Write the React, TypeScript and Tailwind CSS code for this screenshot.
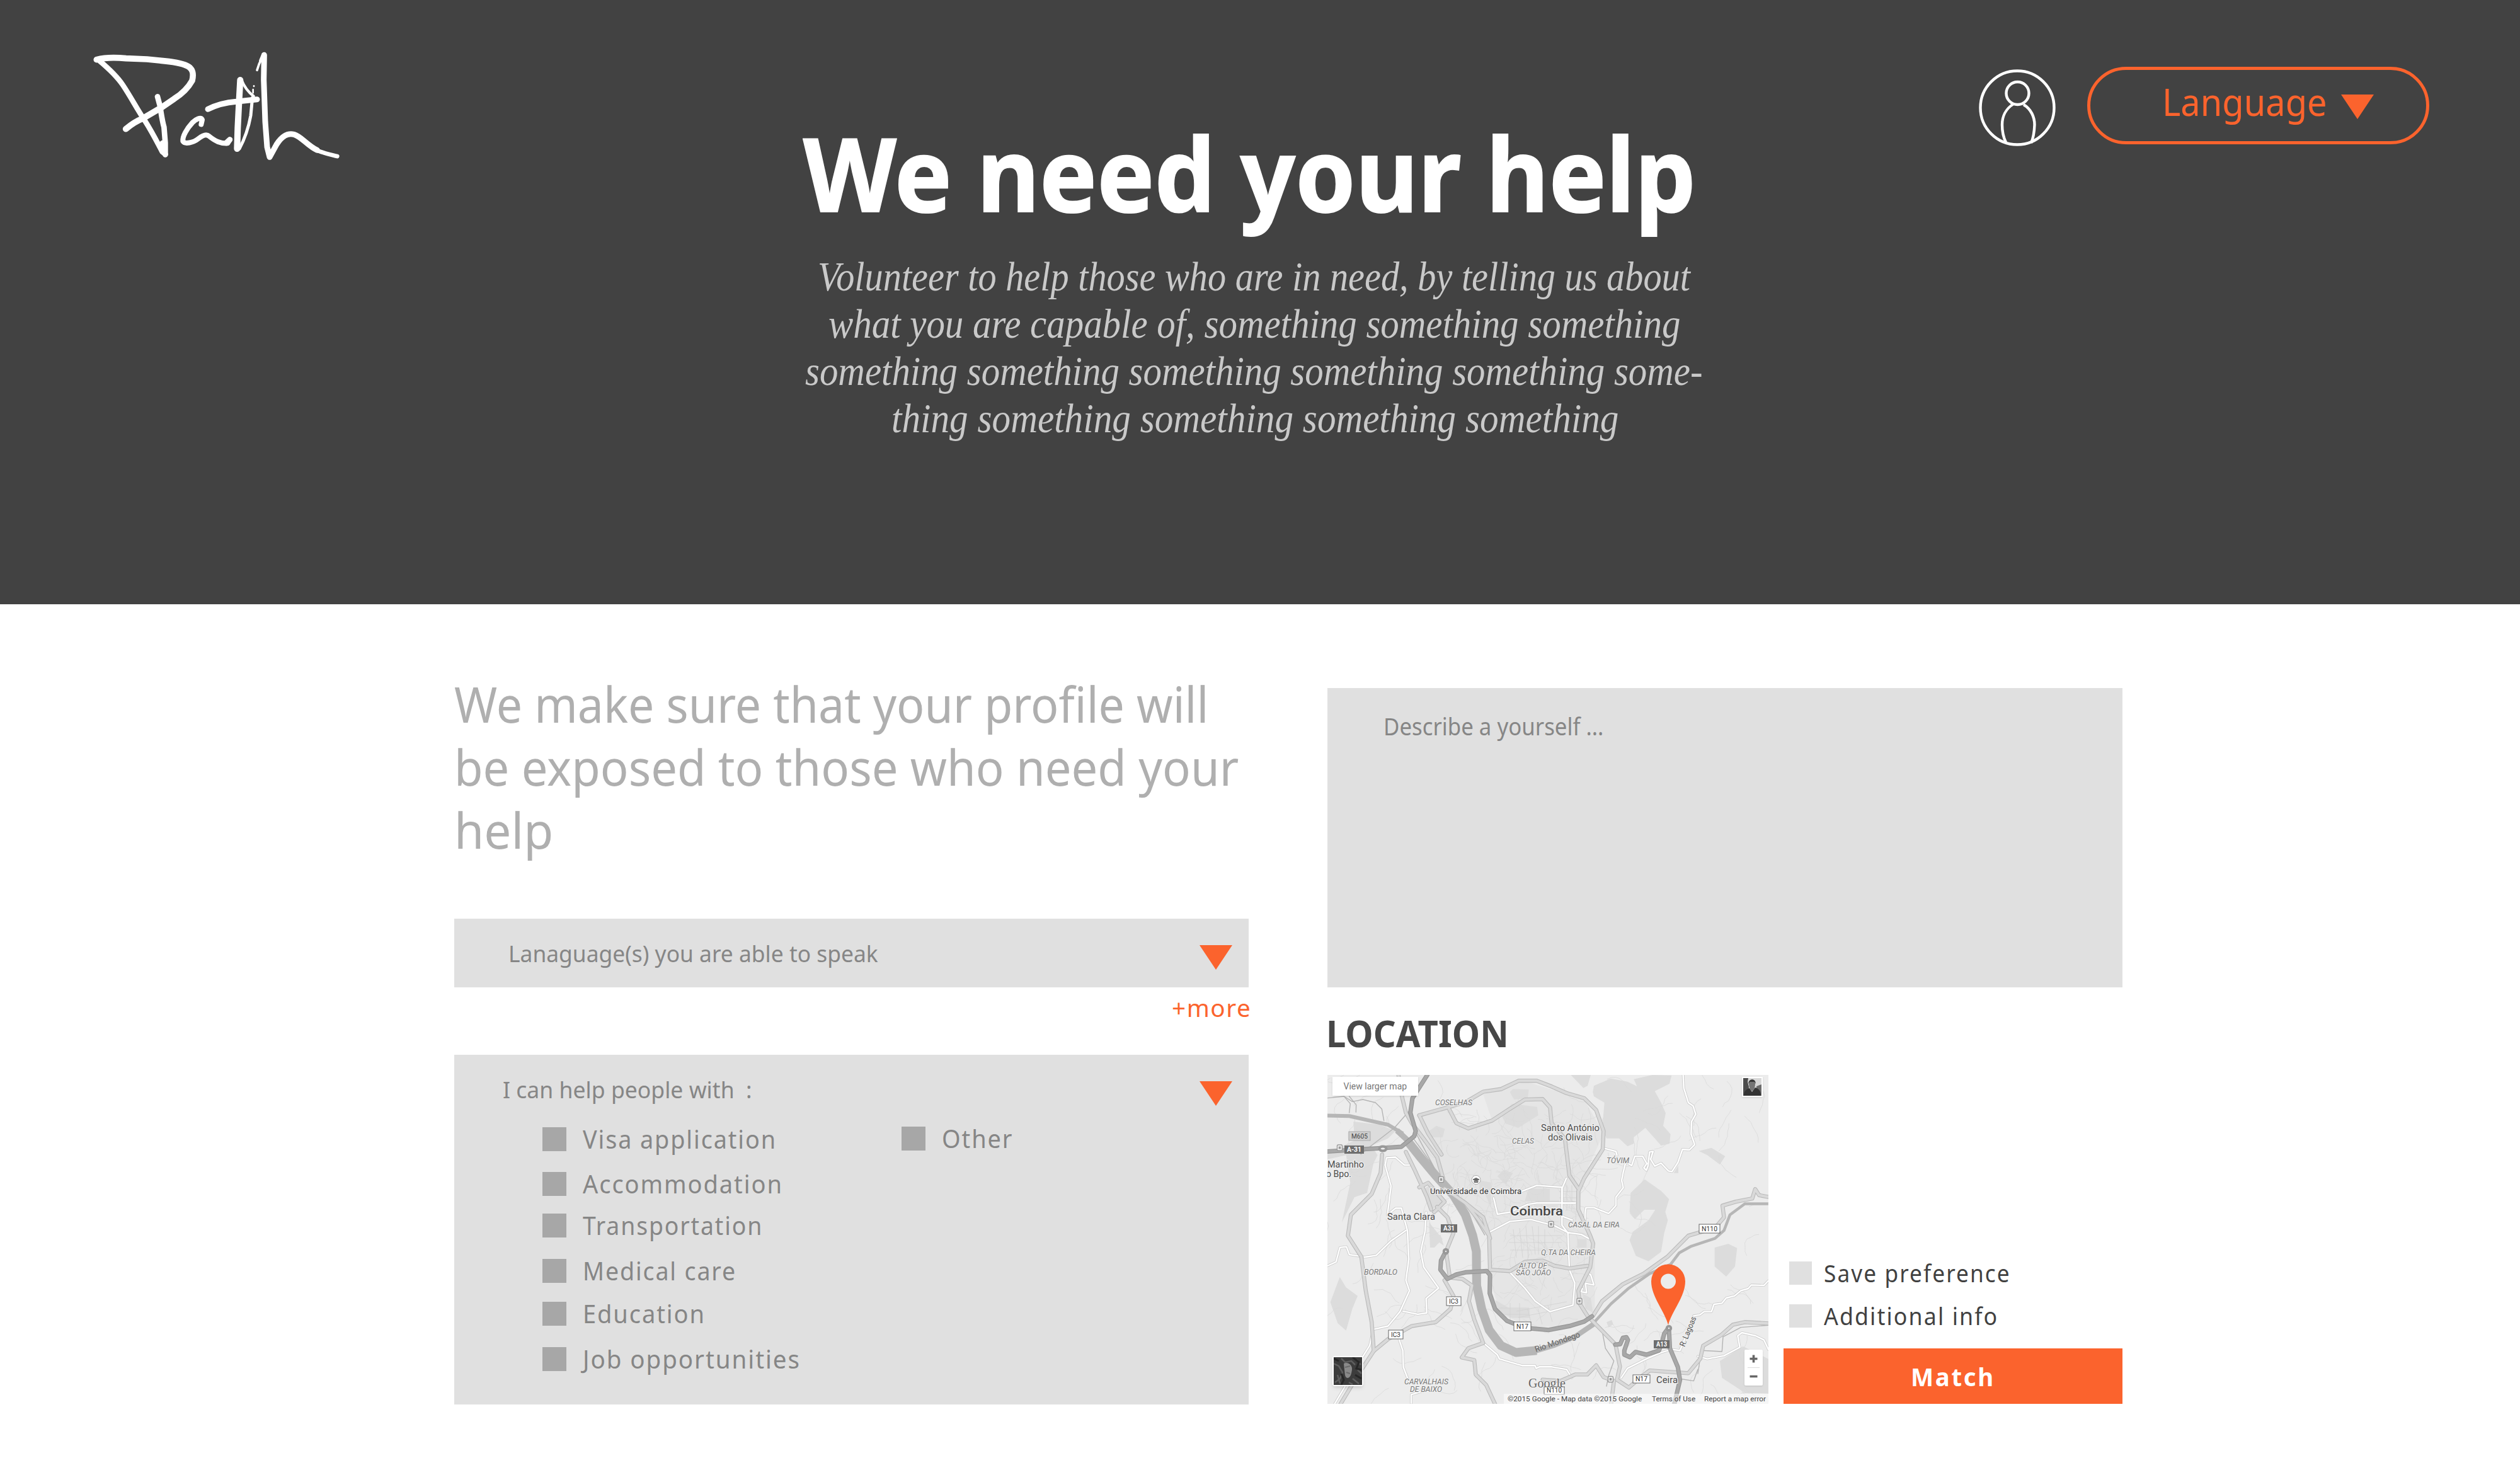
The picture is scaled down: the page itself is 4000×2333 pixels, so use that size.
import { useLayoutEffect, useRef, useState } from "react";
import type { ReactNode } from "react";

const SANS = "font-['Noto_Sans','Open_Sans',sans-serif]";

/** A single line of text condensed or widened to fill its box. */
function FitText({ className, children }: { className: string; children: ReactNode }) {
  const outer = useRef<HTMLSpanElement>(null);
  const inner = useRef<HTMLSpanElement>(null);
  const [scale, setScale] = useState(1);
  useLayoutEffect(() => {
    if (outer.current && inner.current) {
      setScale(outer.current.clientWidth / inner.current.offsetWidth);
    }
  }, []);
  return (
    <span ref={outer} className={`block shrink-0 whitespace-pre ${className}`}>
      <span ref={inner} className="inline-block origin-left" style={{ transform: `scaleX(${scale})` }}>
        {children}
      </span>
    </span>
  );
}

function Triangle({ className }: { className: string }) {
  return (
    <svg viewBox="0 0 52 39" className={`h-[39px] w-[52px] shrink-0 fill-[#fb632d] ${className}`}>
      <path d="M0 0H52L26 39Z" />
    </svg>
  );
}

function Logo() {
  return (
    <svg
      viewBox="0 0 1320 660"
      className="mt-[60px] ml-[120px] h-[220px] w-[440px] shrink-0"
      fill="none"
      stroke="#fff"
      strokeLinecap="round"
      strokeLinejoin="round"
    >
      <path strokeWidth="29" d="M100 104C130 96 180 92 240 98L340 102L400 108C450 112 500 118 530 133C562 148 562 175 555 204C535 240 505 268 470 290L412 330L320 384C290 396 262 415 239 434" />
      <path strokeWidth="25" d="M112 108C150 140 195 180 225 225C265 285 290 335 330 395C365 450 385 490 412 542L428 555" />
      <path strokeWidth="26" d="M390 280L402 325C408 360 412 395 421 425L427 500L427 556" />
      <path strokeWidth="24" d="M414 500L424 550L404 512" />
      <path strokeWidth="24" d="M598 412L603 390C596 376 572 388 556 404C530 432 508 470 511 492C520 508 560 500 585 480C605 464 622 456 635 468C665 492 690 504 724 502L735 484" />
      <path strokeWidth="27" d="M718 500L734 485" />
      <path strokeWidth="27" d="M630 340C670 320 715 308 765 304L864 293" />
      <path strokeWidth="30" d="M784 201L778 310L772 430L769 528" />
      <path strokeWidth="13" d="M790 200C800 226 822 258 848 278" />
      <path strokeWidth="8" d="M845 262V246M849 231V229" />
      <path strokeWidth="15" d="M842 285L834 370C824 425 806 480 780 528" />
      <path strokeWidth="27" d="M898 82L896 200L903 400L912 520L924 568L958 506C985 465 1010 453 1040 460C1075 470 1100 510 1150 535" />
      <path strokeWidth="20" d="M1130 527C1170 548 1210 555 1246 564" />
      <path strokeWidth="11" d="M864 154L874 124L890 92" />
      <path strokeWidth="17" d="M882 108L894 80" />
    </svg>
  );
}

function UserIcon() {
  return (
    <svg
      viewBox="0 0 122 122"
      className="mt-[110px] h-[122px] w-[122px] shrink-0"
      fill="none"
      stroke="#fff"
      strokeWidth="4.400"
    >
      <circle cx="61" cy="61" r="58.5" />
      <circle cx="61.500" cy="38" r="18" />
      <path d="M55 55C42 63 37 76 37 88C37 99 40 110 43 116M71 56C83 63 88.500 76 88.500 88C88 101 86 110 83 117" />
    </svg>
  );
}

/* ---------- Map ---------- */

const FRAMES = {
  all: "matrix(0.4719 0 0 0.4155 -17 -106.300)",
  tl: "matrix(0.3333 0 0 0.3333 -17 -16)",
  tr: "matrix(0.3333 0 0 0.3333 343 -16)",
  bl: "matrix(0.3333 0 0 0.3333 -17 254)",
  br: "matrix(0.3333 0 0 0.3333 343 254)",
};
type Shape = [keyof typeof FRAMES, string];

const URBAN: Shape[] = [
  ["all", "M350 400L440 380L480 440L520 460L590 430L560 330L700 280L900 350L965 480L900 640L880 760L935 900L935 1180L860 1215L720 1220L620 1170L585 1050L585 880L430 690L340 520Z"],
];

const PARKS: Shape[] = [
  ["tr", "M235 130L240 100L320 65L400 80L445 102L430 68L520 48L610 50L600 90L530 125L560 180L582 230L570 290L605 330L600 375L560 385L530 350L485 300L430 345L430 375L400 388L360 350L300 350L280 300L290 180L240 150Z"],
  ["tr", "M482 545L560 600L598 640L580 700L592 740L575 800L560 890L500 935L440 910L410 835L425 795L500 740L532 690L480 690L435 735L410 700L415 610Z"],
  ["br", "M815 60L880 42L922 62L912 150L870 198L815 150Z"],
  ["br", "M840 600L950 530L1071 590V755L960 752L850 680Z"],
  ["bl", "M65 320L110 200L140 250L195 290L170 350L140 455L100 420Z"],
  ["tl", "M175 270L300 285L375 315L340 350L260 385L290 430L270 470L240 610L180 630L120 750L160 560L140 430L50 450L50 420L180 360Z"],
  ["tr", "M740 410L800 395L865 435L840 475L780 430Z"],
  ["tr", "M130 48H225L210 100L190 110Z"],
  ["tr", "M620 515L642 480V515Z"],
  ["tl", "M535 315L570 290L610 305L600 345H550Z"],
  ["tl", "M920 130L935 115L1010 118L1005 160L940 165Z"],
  ["tl", "M880 240L930 185L1050 200L1055 240L960 300L900 280Z"],
  ["tl", "M775 550L830 560L830 680L800 610L775 600Z"],
  ["tl", "M860 530L890 500L935 515L900 570Z"],
  ["tl", "M500 600L540 570L600 650L550 690Z"],
  ["tl", "M535 750L600 830L560 870H540Z"],
  ["tl", "M1010 590H1110V650H990Z"],
  ["bl", "M535 0H590L605 50L560 20Z"],
  ["bl", "M850 310L920 350H1015V395H930L860 360Z"],
  ["br", "M185 280L225 300L235 370L200 350Z"],
  ["br", "M300 415L325 405L332 425L310 440Z"],
  ["br", "M160 20H205V60H160Z"],
];

const RIVER: [number, string][] = [
  [6, "M36 411L110 413L240 446L290 480"],
  [9, "M270 468L310 510L345 565"],
  [14, "M310 515L345 565L400 640L460 715L500 790L525 870L537 930L538 1060L555 1150L580 1230L620 1290L670 1316L740 1308"],
  [8, "M730 1312L800 1288L870 1255L935 1205"],
  [4.5, "M930 1205L990 1130L1050 1070L1120 1015L1190 980L1220 935L1260 910L1340 880L1370 850L1390 790L1440 748L1519 748"],
];

const ROADS: Shape[] = [
  ["all", "M275 256L285 330L300 400L320 440L360 500L405 570L425 650"],
  ["all", "M300 550L330 620L370 720L385 770M345 685L375 668L430 740L395 780"],
  ["all", "M345 410L440 380L500 360L560 320L620 310L680 278L740 278L790 300L840 325L900 345L940 390L965 470L962 540L900 650L880 700L880 770L920 870L930 900L920 990L880 1080L885 1130L910 1175L1005 1285L1020 1370L1010 1420L1050 1450L1090 1410L1120 1385L1250 1395L1290 1340L1300 1290L1360 1250L1400 1210L1440 1200L1519 1205"],
  ["all", "M445 385L470 440L510 460L590 430L650 385L700 350L760 348L785 380L790 440L835 500L850 640L880 690"],
  ["all", "M220 560L215 630L185 710L115 790L105 870L150 950L165 1080L185 1200L192 1310L140 1400L80 1513"],
  ["all", "M405 760L440 800L460 860L435 930L448 1030L490 1035L522 1060L512 1120L530 1190L560 1280L510 1300L488 1335L530 1345L535 1400L570 1440L600 1513"],
  ["all", "M192 1310L240 1265L320 1215L400 1200L450 1150L460 1100L430 1040"],
  ["all", "M430 690L500 745L545 810L580 870L583 1000L650 1005L700 970L760 965L800 985L850 995L910 985M500 745L560 800L583 880"],
  ["all", "M930 1175L960 1120L1030 1055L1100 1015L1180 950L1250 870L1340 840L1370 800L1365 755L1410 740L1465 728L1475 692L1488 715L1519 722"],
  ["all", "M760 1420L820 1425L870 1400L910 1400L940 1365L965 1410L1000 1425L990 1513M345 410L375 480L420 560"],
];

const STREETS: Shape[] = [
  ["all", "M690 700L740 678L825 685V745H870"],
  ["all", "M595 725L608 788L650 780L710 750L740 745H870"],
  ["all", "M580 857L650 815L720 808L800 832L845 858L890 865L922 885M825 795L860 810"],
  ["all", "M840 650L825 690V830L845 860L850 1000L868 1050L862 1135L785 1160L735 1120L700 1070L650 1010"],
  ["all", "M312 600H295L265 570L235 572L230 600L250 680L238 790L265 765L285 765L305 850L310 960L300 1040L312 1080L280 1160L240 1215L190 1228L178 1290L145 1350L60 1513"],
  ["all", "M368 780L365 850L350 930L360 990L410 1070L368 1110L370 1165L340 1170L290 1158"],
  ["all", "M160 952L200 945L250 890L300 850M36 985L65 970L78 915L100 912L110 942L155 950"],
  ["tr", "M665 48L668 110L690 180L712 195L725 235L705 270L703 330L720 380L695 405L662 402L640 465L612 508L595 505L560 468L530 482L510 450L522 412L505 415L498 480L490 502L478 490L492 470L472 435L435 435L420 480L405 470"],
  ["tr", "M280 395L345 412L350 430M390 470L380 510L372 550L380 585L345 630V670L310 708L240 680L202 680L198 710V740"],
  ["br", "M1071 218L1050 240L990 238L975 255L940 265L910 290L870 300L850 325L812 330L800 365L765 365L745 380L715 385"],
  ["br", "M735 578L780 590L860 575L935 535L925 480L945 465L1010 480L1050 500L1071 545"],
  ["bl", "M795 515L860 570L870 590L920 605L980 622H1040L1045 635L1060 628H1120L1190 640L1215 680"],
  ["bl", "M390 490L410 550L413 630L440 700M500 745L450 760V800"],
  ["br", "M370 680L400 635L490 590L560 560L610 545L650 550L675 490"],
  ["br", "M185 255L180 270L205 275L200 230L240 238L225 190L210 180"],
];

const MOTORWAYS: Shape[] = [
  ["all", "M372 256L322 345L315 400L333 470L328 490L285 530L225 535L150 540L36 548"],
  ["all", "M434 930L418 965L416 1000L440 1035L470 1018L500 1010L572 1005L583 1020L582 1090L600 1150L640 1195L700 1222L780 1230L850 1215L900 1198L926 1178"],
  ["br", "M342 522L365 520L378 490L395 487L402 500L385 550L385 570L412 582L438 557L490 570L550 550L562 520L575 470L597 440L602 540L640 630L650 690L622 810"],
];

const LANES: Shape[] = [
  ["tl", "M50 158L130 150L170 175L220 165L280 180L310 210L320 265M130 150L160 185L155 228M155 150L188 190L187 225M210 425L260 385L370 300L440 220"],
  ["br", "M240 425L280 460L295 540L335 600L310 670L300 720M735 660L752 550L850 555L855 485L940 440L1071 430M650 685L715 695L735 640"],
  ["tl", "M750 700L810 800M730 690L800 810M470 320L560 490M460 350L540 460L560 500"],
];

/** Deterministic fine streets: dense inside the city, sparse around it. */
function minorStreets(): string {
  let seed = 11;
  const rnd = () => {
    seed = (seed * 16807) % 2147483647;
    return seed / 2147483647;
  };
  let d = "";
  const walk = (x: number, y: number, steps: number, len: number) => {
    let a = rnd() * 6.28;
    d += `M${x.toFixed(1)} ${y.toFixed(1)}`;
    for (let i = 0; i < steps; i++) {
      a += (rnd() - 0.5) * 1.3;
      x += Math.cos(a) * len;
      y += Math.sin(a) * len;
      d += `L${x.toFixed(1)} ${y.toFixed(1)}`;
    }
  };
  for (let i = 0; i < 150; i++) walk(rnd() * 700, rnd() * 522, 7, 7);
  for (let i = 0; i < 130; i++) walk(190 + rnd() * 220, 60 + rnd() * 160, 6, 6);
  for (let i = 0; i < 60; i++) walk(275 + rnd() * 130, 210 + rnd() * 150, 5, 6);
  return d;
}

const GRID =
  "M330 200H368M328 208H366M326 216H366M372 175V215M380 175V215M388 175V215M368 185H395M368 195H395M295 245L300 290M305 243L310 290M315 240L319 290M325 240L330 285M335 240V285M345 245V290M290 255H372M288 266H372M290 278H375M300 375L380 360M303 385L378 370M318 372L325 400M334 370L341 396M350 366L357 392M272 370H320M272 380H320M290 362V392M305 362V392";

function Lines({ shapes, width, className }: { shapes: Shape[]; width: number; className: string }) {
  return (
    <g fill="none" strokeLinecap="round" strokeLinejoin="round" strokeWidth={width} className={className}>
      {shapes.map(([frame, d]) => (
        <path key={d} d={d} transform={FRAMES[frame]} vectorEffect="non-scaling-stroke" />
      ))}
    </g>
  );
}

type Label = { t: string; x: number; y: number; w: number; k: "area" | "town" | "city" | "poi" };
const LABELS: Label[] = [
  { t: "COSELHAS", x: 171, y: 48, w: 59, k: "area" },
  { t: "CELAS", x: 293, y: 109, w: 35, k: "area" },
  { t: "TÓVIM", x: 443, y: 140, w: 36, k: "area" },
  { t: "CASAL DA EIRA", x: 382, y: 242, w: 82, k: "area" },
  { t: "Q.TA DA CHEIRA", x: 339, y: 286, w: 87, k: "area" },
  { t: "ALTO DE", x: 304, y: 307, w: 45, k: "area" },
  { t: "SÃO JOÃO", x: 299, y: 318, w: 56, k: "area" },
  { t: "BORDALO", x: 58, y: 317, w: 53, k: "area" },
  { t: "CARVALHAIS", x: 122, y: 491, w: 70, k: "area" },
  { t: "DE BAIXO", x: 131, y: 503, w: 51, k: "area" },
  { t: "Santo António", x: 339, y: 89, w: 93, k: "town" },
  { t: "dos Olivais", x: 350, y: 104, w: 71, k: "town" },
  { t: "Santa Clara", x: 95, y: 230, w: 76, k: "town" },
  { t: "Martinho", x: 0, y: 147, w: 58, k: "town" },
  { t: "o Bpo.", x: -2, y: 162, w: 40, k: "town" },
  { t: "Ceira", x: 522, y: 489, w: 34, k: "town" },
  { t: "Coimbra", x: 290, y: 223, w: 84, k: "city" },
  { t: "Universidade de Coimbra", x: 163, y: 189, w: 145, k: "poi" },
];

const LABEL_STYLE = {
  area: "fill-[#787878] text-[12.5px] italic",
  town: "fill-[#4c4c4c] text-[14.5px]",
  city: "fill-[#454545] text-[20px] font-medium",
  poi: "fill-[#303030] text-[13px]",
};

type Shield = { t: string; x: number; y: number; w: number; h: number; k: "white" | "dark" | "grey" };
const SHIELDS: Shield[] = [
  { t: "M605", x: 34, y: 90, w: 34, h: 14, k: "grey" },
  { t: "A-31", x: 27, y: 112, w: 31, h: 13, k: "dark" },
  { t: "A31", x: 180, y: 237, w: 26, h: 13, k: "dark" },
  { t: "N110", x: 590, y: 237, w: 33, h: 14, k: "white" },
  { t: "IC3", x: 189, y: 352, w: 23, h: 14, k: "white" },
  { t: "IC3", x: 97, y: 405, w: 23, h: 14, k: "white" },
  { t: "N17", x: 296, y: 392, w: 27, h: 14, k: "white" },
  { t: "A13", x: 518, y: 421, w: 25, h: 13, k: "dark" },
  { t: "N17", x: 485, y: 476, w: 27, h: 13, k: "white" },
  { t: "N110", x: 344, y: 495, w: 32, h: 12, k: "white" },
];
const SHIELD_BOX = {
  white: "fill-white stroke-[#666]",
  dark: "fill-[#6e6e6e] stroke-none",
  grey: "fill-[#cfcfcf] stroke-[#aaa]",
};
const SHIELD_TEXT = {
  white: "fill-[#333]",
  dark: "fill-white font-bold",
  grey: "fill-[#444]",
};

const STATIONS: [number, number][] = [
  [19.5, 115.5],
  [180.500, 166],
  [355, 237],
  [400, 359],
  [449.5, 483],
];

function MapDrawing() {
  return (
    <svg viewBox="0 0 700 522" className="h-[522px] w-[700px] font-['Roboto',sans-serif]">
      <rect width="700" height="522" fill="#ececec" />
      <g fill="#e5e5e5">
        {URBAN.map(([f, d]) => (
          <path key={d} d={d} transform={FRAMES[f]} />
        ))}
      </g>
      <g fill="#dcdcdc">
        {PARKS.map(([f, d]) => (
          <path key={d} d={d} transform={FRAMES[f]} />
        ))}
      </g>
      <path d={minorStreets()} fill="none" stroke="#d9d9d9" strokeWidth="0.8" />
      <path d={GRID} fill="none" stroke="#d2d2d2" strokeWidth="0.8" />
      <g fill="none" stroke="#b6b6b6" strokeLinejoin="round">
        {RIVER.map(([w, d]) => (
          <path key={d} d={d} strokeWidth={w} transform={FRAMES.all} vectorEffect="non-scaling-stroke" />
        ))}
      </g>
      <Lines shapes={LANES} width={1.4} className="stroke-[#b4b4b4]" />
      <Lines shapes={STREETS} width={4} className="stroke-[#c9c9c9]" />
      <Lines shapes={STREETS} width={2.4} className="stroke-white" />
      <Lines shapes={ROADS} width={6.4} className="stroke-[#bababa]" />
      <Lines shapes={ROADS} width={4.2} className="stroke-[#d9d9d9]" />
      <Lines shapes={MOTORWAYS} width={7} className="stroke-[#969696]" />
      <Lines shapes={MOTORWAYS} width={4.600} className="stroke-[#a8a8a8]" />
      <g fill="#ececec" stroke="#989898" strokeWidth="4">
        <circle cx="188" cy="280" r="3.200" />
        <circle cx="542" cy="402" r="3.200" />
        <ellipse cx="88" cy="117" rx="5.500" ry="3.500" />
      </g>
      {STATIONS.map(([x, y]) => (
        <g key={x}>
          <rect x={x - 4} y={y - 4.5} width="8" height="9" rx="1.5" fill="#f4f4f4" stroke="#999" strokeWidth="1.4" />
          <rect x={x - 1.8} y={y - 2} width="3.600" height="4" fill="#999" />
        </g>
      ))}
      <circle cx="236" cy="166.500" r="7" fill="#fff" stroke="#aaa" />
      <path d="M231 166L236 163.500L241 166L236 168.500ZM233 168.500V170.500H239V168.500L236 170Z" fill="#666" stroke="#666" />
      {LABELS.map((l) => (
        <text
          key={l.t}
          x={l.x}
          y={l.y}
          textLength={l.w}
          lengthAdjust="spacingAndGlyphs"
          stroke="#f0f0f0"
          strokeWidth="2.500"
          paintOrder="stroke"
          strokeLinejoin="round"
          className={LABEL_STYLE[l.k]}
        >
          {l.t}
        </text>
      ))}
      <text transform="translate(331 440) rotate(-19)" textLength="75" lengthAdjust="spacingAndGlyphs" className="fill-[#666] text-[13px]">
        Rio Mondego
      </text>
      <text
        transform="translate(567 432) rotate(-68)"
        textLength="50"
        lengthAdjust="spacingAndGlyphs"
        stroke="#f0f0f0"
        strokeWidth="2.500"
        paintOrder="stroke"
        className="fill-[#555] text-[13px]"
      >
        R. Lagoas
      </text>
      <text x="319" y="496" textLength="59" lengthAdjust="spacingAndGlyphs" stroke="#f4f4f4" strokeWidth="1.500" paintOrder="stroke" className="fill-[#666] font-['Liberation_Serif',serif] text-[22px]">
        Google
      </text>
      {SHIELDS.map((s) => (
        <g key={`${s.t}-${s.x}`}>
          <rect x={s.x} y={s.y} width={s.w} height={s.h} className={SHIELD_BOX[s.k]} />
          <text
            x={s.x + 4}
            y={s.y + s.h - 2.6}
            textLength={s.w - 8}
            lengthAdjust="spacingAndGlyphs"
            className={`text-[11.5px] ${SHIELD_TEXT[s.k]}`}
          >
            {s.t}
          </text>
        </g>
      ))}
      <path
        d="M541 397C536 376 514 352 514 327.500A27 27 0 0 1 568 327.500C568 352 546 376 541 397ZM541 315.500A12 12 0 1 0 541 339.500A12 12 0 1 0 541 315.500Z"
        fill="#fb632d"
        fillRule="evenodd"
      />
    </svg>
  );
}

function SatelliteThumb() {
  return (
    <svg viewBox="0 0 45 44" className="h-full w-full">
      <rect width="45" height="44" fill="#3c3c3c" />
      <g fill="none" stroke="#5e5e5e" strokeWidth="2.500">
        <path d="M0 10L8 14L14 24L10 34L2 40M12 2L18 8L28 6L34 12M38 20L44 26M6 28L10 42M30 34L40 42M36 4L43 12M24 40L30 43" />
      </g>
      <path d="M12 44L16 36L12 26M30 0L40 8L36 18L44 20M34 28L44 34M0 2L8 6" fill="none" stroke="#262626" strokeWidth="3" />
      <path d="M16 10C22 7 30 12 29 20C28 26 27 32 22 33C17 32 18 26 17 20Z" fill="#8a8a8a" />
      <path d="M18 16L26 14M20 24L26 26" stroke="#6a6a6a" strokeWidth="2" />
    </svg>
  );
}

function Portrait() {
  return (
    <svg viewBox="0 0 29 28" className="h-full w-full">
      <rect width="29" height="28" fill="#d8d8d8" />
      <path d="M0 0H8L7 6L9 14L8 28H0Z" fill="#4c4c4c" />
      <path d="M21 13L29 10V28H21Z" fill="#6b6b6b" />
      <path d="M1 28C1 20 6 17 10 16L14 22L19 15C25 17 28 20 28 28Z" fill="#333" />
      <path d="M9 8C9 2 19 2 19 8C19 15 17 20 14 20.500C11 20 9 14 9 8Z" fill="#757575" />
      <path d="M8.500 9C7.500 0 21 0 19.500 9L18 6H10.500Z" fill="#383838" />
    </svg>
  );
}

function LocationMap() {
  return (
    <div className="relative h-[522px] w-[700px] shrink-0 overflow-hidden font-['Roboto',sans-serif]">
      <MapDrawing />
      <div className="absolute top-[3px] left-[8px] flex h-[30px] w-[136px] justify-center bg-white shadow-sm">
        <FitText className="w-[101px] text-[14px] leading-[30px] text-[#777]">View larger map</FitText>
      </div>
      <div className="absolute top-[3px] right-[9px] h-[32px] w-[33px] bg-white p-[2px] shadow">
        <Portrait />
      </div>
      <div className="absolute top-[446px] left-[8px] h-[48px] w-[49px] rounded-sm bg-white p-[2px] shadow-md">
        <SatelliteThumb />
      </div>
      <div className="absolute right-0 bottom-0 flex h-4 w-[420px] bg-white/50 pl-[6px] text-[11.5px] leading-4 text-[#444]">
        <FitText className="w-[213px]">©2015 Google - Map data ©2015 Google</FitText>
        <FitText className="ml-[16px] w-[69px]">Terms of Use</FitText>
        <FitText className="ml-[14px] w-[98px]">Report a map error</FitText>
      </div>
      <div className="absolute top-[436px] right-[9px] h-[57px] w-[29px] rounded-xs bg-white shadow">
        <svg viewBox="0 0 29 57" className="h-[57px] w-[29px]">
          <path d="M8.500 14.500H20.500M14.500 8.500V20.500M8.500 42.500H20.500" stroke="#666" strokeWidth="3.600" />
          <path d="M5 28.500H24" stroke="#ddd" />
        </svg>
      </div>
    </div>
  );
}

/* ---------- Form ---------- */

function HelpOption({ className, labelClass, children }: { className: string; labelClass: string; children: string }) {
  return (
    <label className={`flex h-[38px] items-start ${className}`}>
      <span className="h-[38px] w-[38px] shrink-0 bg-[#a7a7a7]" />
      <FitText className={`ml-[26px] text-[40px] leading-[38px] tracking-[0.05em] text-[#868686] ${labelClass}`}>
        {children}
      </FitText>
    </label>
  );
}

function Preference({ className, labelClass, children }: { className: string; labelClass: string; children: string }) {
  return (
    <label className={`flex h-[37px] items-start ${className}`}>
      <span className="h-[37px] w-[36px] shrink-0 bg-[#e0e0e0]" />
      <FitText className={`ml-[19px] text-[38px] leading-[37px] tracking-[0.06em] text-[#414141] ${labelClass}`}>
        {children}
      </FitText>
    </label>
  );
}

export default function App() {
  return (
    <div className={`min-h-[2333px] w-[4000px] bg-white ${SANS}`}>
      <header className="flex h-[959px] items-start bg-[#424242]">
        <Logo />
        <div className="ml-[712px] flex w-[1440px] shrink-0 flex-col pt-[173px]">
          <h1 className="font-bold text-white [-webkit-text-stroke:2px_white]">
            <FitText className="ml-[3px] w-[1417px] text-[162px] leading-[200px]">We need your help</FitText>
          </h1>
          <div className="mt-[29px] flex flex-col font-['Liberation_Serif',serif] text-[65px] leading-[75px] text-[#c9c9c9] italic">
            <FitText className="ml-[26px] w-[1385px]">Volunteer to help those who are in need, by telling us about</FitText>
            <FitText className="ml-[43px] w-[1352px]">what you are capable of, something something something</FitText>
            <FitText className="ml-[6px] w-[1425px]">something something something something something some-</FitText>
            <FitText className="ml-[143px] w-[1154px]">thing something something something something</FitText>
          </div>
        </div>
        <div className="ml-[429px] flex items-start">
          <UserIcon />
          <button className="mt-[106px] ml-[50px] flex h-[123px] w-[543px] items-start rounded-full border-[5px] border-[#fb632d] pl-[114px]">
            <FitText className="mt-[2px] w-[262px] text-left text-[60px] leading-[96px] text-[#fb632d]">Language</FitText>
            <Triangle className="mt-[39px] ml-[22px]" />
          </button>
        </div>
      </header>

      <main className="flex items-start pl-[721px]">
        <section className="w-[1261px] shrink-0 pt-[108px]">
          <h2 className="text-[78px] leading-[100px] text-[#afafaf]">
            <FitText className="w-[1197px]">We make sure that your profile will</FitText>
            <FitText className="w-[1245px]">be exposed to those who need your</FitText>
            <FitText className="w-[157px]">help</FitText>
          </h2>
          <div className="mt-[91px] flex h-[109px] items-start bg-[#e0e0e0] pl-[86px]">
            <FitText className="mt-[35px] w-[587px] text-[37px] leading-[40px] text-[#868686]">
              Lanaguage(s) you are able to speak
            </FitText>
            <Triangle className="mt-[42px] mr-[26px] ml-auto" />
          </div>
          <FitText className="mt-[12px] ml-[1139px] w-[126px] text-[38px] leading-[40px] tracking-[0.04em] text-[#fb632d]">
            +more
          </FitText>
          <div className="mt-[55px] h-[555px] bg-[#e0e0e0]">
            <div className="flex items-start pt-[35px]">
              <FitText className="ml-[77px] w-[396px] text-[37px] leading-[40px] text-[#868686]">
                {"I can help people with  :"}
              </FitText>
              <Triangle className="mt-[7px] mr-[26px] ml-auto" />
            </div>
            <div className="mt-[32px] flex pl-[140px]">
              <div className="w-[570px]">
                <HelpOption className="mt-[2px]" labelClass="w-[308px]">Visa application</HelpOption>
                <HelpOption className="mt-[33px]" labelClass="w-[318px]">Accommodation</HelpOption>
                <HelpOption className="mt-[28px]" labelClass="w-[286px]">Transportation</HelpOption>
                <HelpOption className="mt-[34px]" labelClass="w-[244px]">Medical care</HelpOption>
                <HelpOption className="mt-[30px]" labelClass="w-[195px]">Education</HelpOption>
                <HelpOption className="mt-[34px]" labelClass="w-[346px]">Job opportunities</HelpOption>
              </div>
              <HelpOption className="mt-[1px]" labelClass="w-[113px]">Other</HelpOption>
            </div>
          </div>
        </section>

        <section className="ml-[125px] w-[1262px] shrink-0 pt-[133px]">
          <div className="h-[475px] bg-[#e0e0e0] pt-[40px] pl-[89px]">
            <FitText className="w-[349px] text-[38px] leading-[40px] text-[#868686]">Describe a yourself ...</FitText>
          </div>
          <h3 className="mt-[42px] font-bold text-[#474747]">
            <FitText className="-ml-[2px] w-[290px] text-[60px] leading-[60px]">LOCATION</FitText>
          </h3>
          <div className="mt-[37px] flex h-[522px]">
            <LocationMap />
            <div className="ml-[24px] flex flex-1 flex-col justify-end">
              <Preference className="ml-[9px]" labelClass="w-[297px]">Save preference</Preference>
              <Preference className="mt-[31px] ml-[9px]" labelClass="w-[277px]">Additional info</Preference>
              <button className="mt-[33px] flex h-[88px] justify-center bg-[#fb632d] font-bold text-white">
                <FitText className="mt-[15px] w-[134px] text-left text-[40px] leading-[60px] tracking-[0.07em]">Match</FitText>
              </button>
            </div>
          </div>
        </section>
      </main>
    </div>
  );
}
